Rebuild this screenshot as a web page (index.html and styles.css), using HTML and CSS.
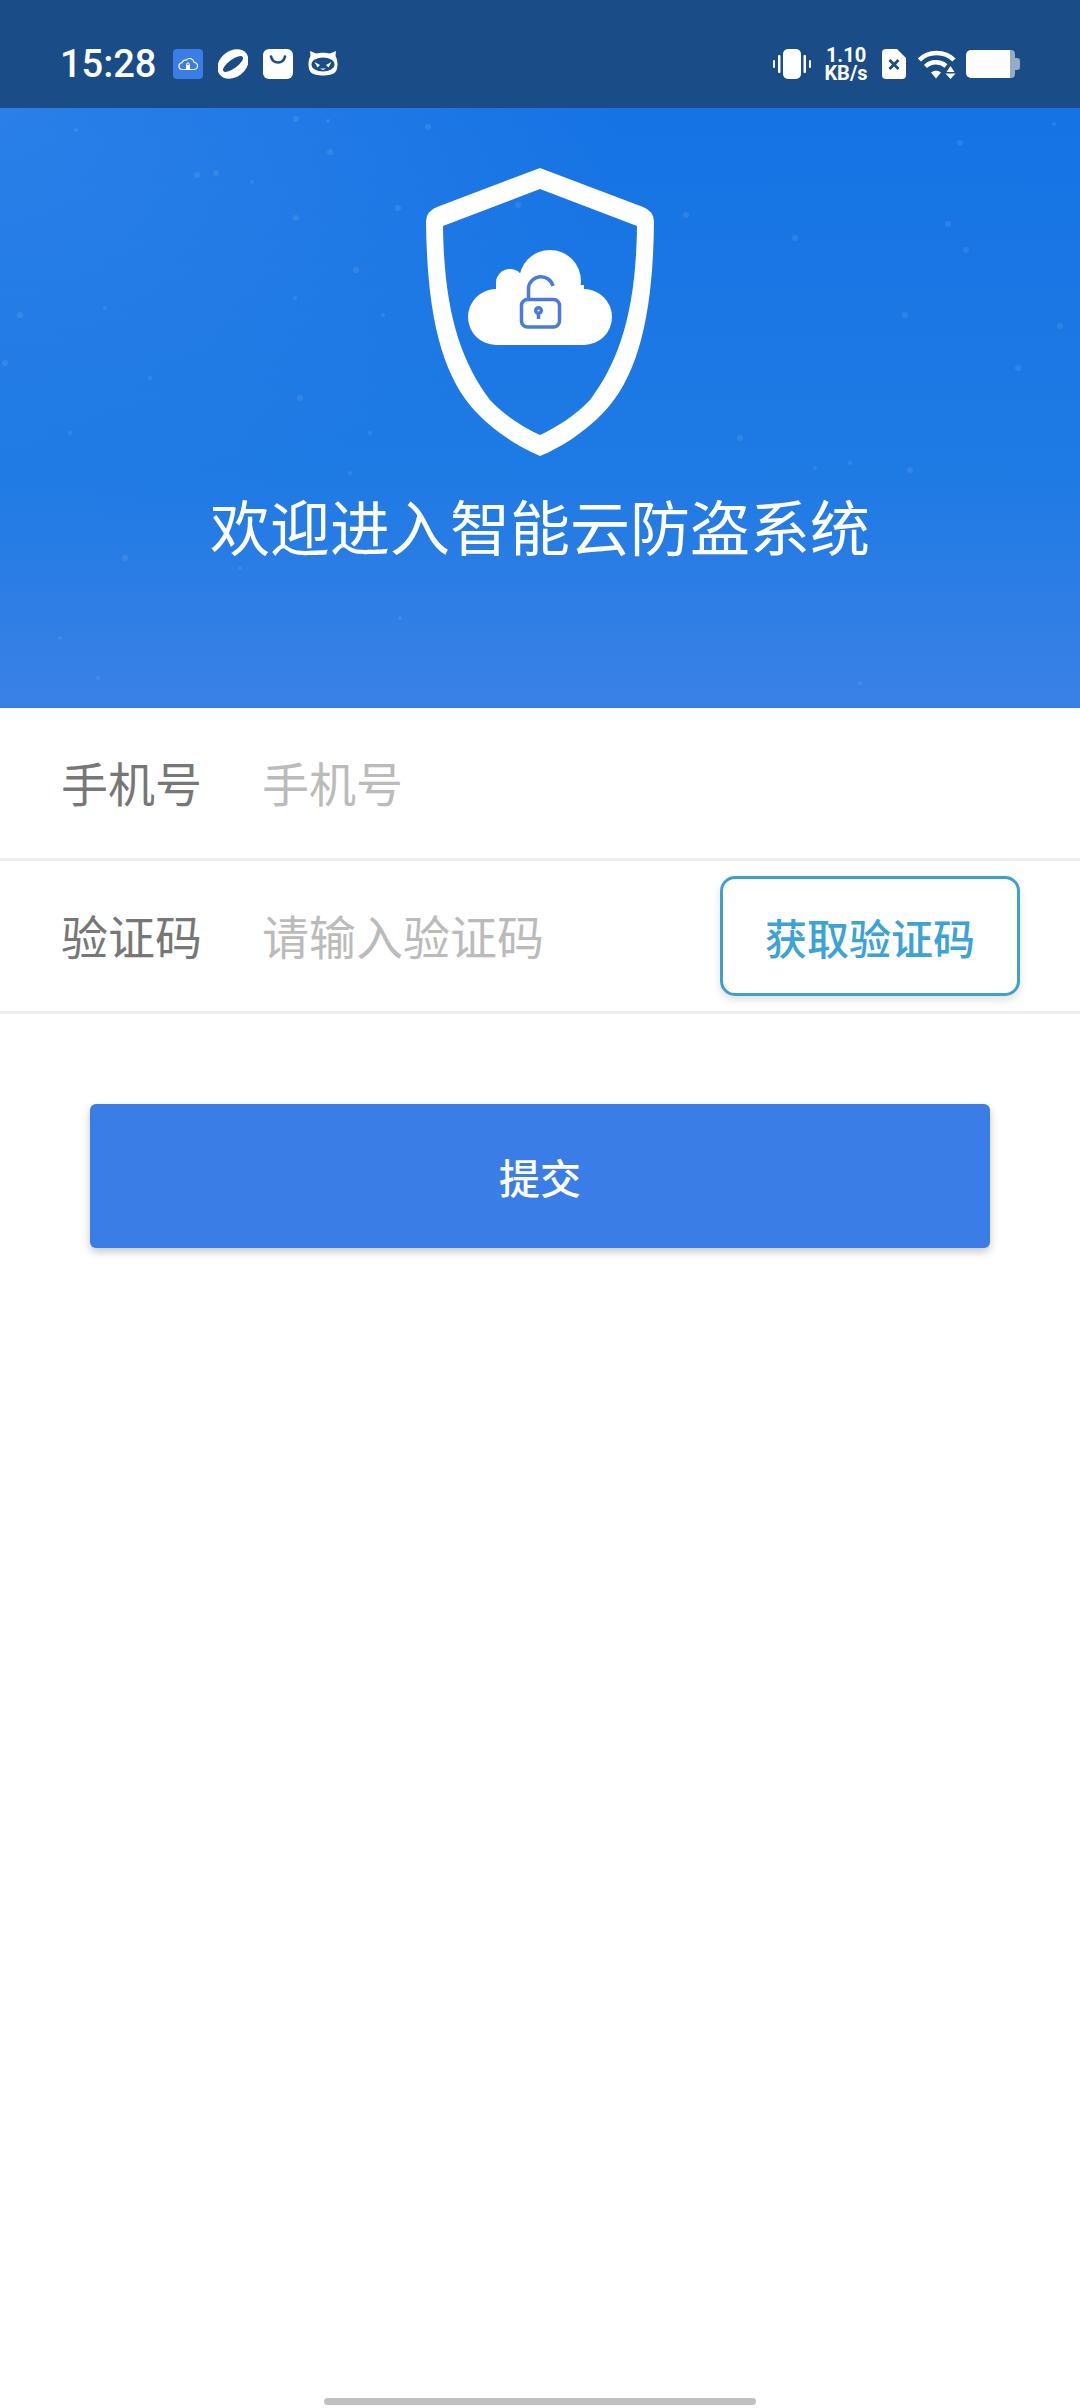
FILE: index.html
```html
<!DOCTYPE html>
<html lang="zh-CN">
<head>
    <meta charset="UTF-8">
    <meta name="viewport" content="width=device-width, initial-scale=1.0">
    <title>智能云防盗系统</title>
    <link rel="stylesheet" href="styles.css">
</head>
<body>
    <div class="status-bar">
        <span class="clock">15:28</span>
        <div class="notify-icons">
            <svg class="icon-30" viewBox="0 0 30 30">
                <rect width="30" height="30" rx="4" fill="#3b7de6"/>
                <path d="M9.500 20.500a3.400 3.400 0 0 1-.4-6.800 3.600 3.600 0 0 1 4-2.600 4.600 4.600 0 0 1 8 2.200 3.600 3.600 0 0 1-.4 7.200z" fill="none" stroke="#fff" stroke-width="1.200"/>
                <rect x="13" y="16" width="4" height="4" fill="#fff"/>
                <path d="M13.800 16v-1a1.200 1.200 0 0 1 2.400 0v1" fill="none" stroke="#fff"/>
            </svg>
            <svg class="icon-30" viewBox="0 0 30 30">
                <ellipse cx="15" cy="15" rx="17" ry="13" fill="#fff" transform="rotate(-38 15 15)"/>
                <ellipse cx="15" cy="15" rx="12" ry="4.300" fill="#1a4d87" transform="rotate(-36 15 15)"/>
            </svg>
            <svg class="icon-30" viewBox="0 0 30 30">
                <rect width="30" height="30" rx="6" fill="#fff"/>
                <path d="M8 7.500c1 4 3.500 6 7 6s6-2 7-6" fill="none" stroke="#1a4d87" stroke-width="2.600" stroke-linecap="round"/>
            </svg>
            <svg class="icon-30" viewBox="0 0 30 30">
                <path d="M2.500 7 L2 2 8 4.500 C12 3.500 18 3.500 22 4.500 L28 2 27.500 7 C30 11 30.500 20 27 23.500 23 27.500 7 27.500 3 23.500 -.5 20 0 11 2.500 7z" fill="#fff"/>
                <ellipse cx="15" cy="15.500" rx="11.500" ry="7" fill="#1a4d87"/>
                <path d="M6.500 13 12 16 9.500 18.500z" fill="#fff"/>
                <path d="M23.500 13 18 16 20.500 18.500z" fill="#fff"/>
                <path d="M12 19.500h6l-3 1.500z" fill="#fff"/>
            </svg>
        </div>
        <div class="system-icons">
            <svg class="icon-vibrate" viewBox="0 0 38 30">
                <rect x="10" y="0" width="18" height="30" rx="5" fill="#fff"/>
                <rect x="0" y="11" width="2" height="8" rx="1" fill="#fff"/>
                <rect x="5" y="6" width="2.500" height="18" rx="1" fill="#fff"/>
                <rect x="30.500" y="6" width="2.500" height="18" rx="1" fill="#fff"/>
                <rect x="36" y="11" width="2" height="8" rx="1" fill="#fff"/>
            </svg>
            <div class="net-speed">1.10<br>KB/s</div>
            <svg class="icon-sim" viewBox="0 0 24 30">
                <path d="M4 0H15L24 9V26a4 4 0 0 1-4 4H4a4 4 0 0 1-4-4V4a4 4 0 0 1 4-4z" fill="#fff"/>
                <path d="M7.500 11 16.500 20M16.500 11 7.500 20" stroke="#1a4d87" stroke-width="2.800" fill="none"/>
            </svg>
            <svg class="icon-wifi" viewBox="0 0 38 30">
                <path d="M1.500 11C10 1.500 27 1.500 36 11" fill="none" stroke="#fff" stroke-width="4.500"/>
                <path d="M7.500 17.500C13 12 22 12 28 17" fill="none" stroke="#fff" stroke-width="4.500"/>
                <path d="M13 23.500 18 29.500 23 23.500C20 21 16 21 13 23.500z" fill="#fff"/>
                <path d="M28.500 23 32.500 17 36.500 23z" fill="#fff"/>
                <path d="M27.500 24.500H37.500L32.500 30z" fill="#fff"/>
            </svg>
            <svg class="icon-battery" viewBox="0 0 54 28">
                <path d="M5 0H44V28H5a5 5 0 0 1-5-5V5a5 5 0 0 1 5-5z" fill="#fff"/>
                <path d="M44 0h1a4 4 0 0 1 4 4v4h2a3 3 0 0 1 3 3v6a3 3 0 0 1-3 3h-2v4a4 4 0 0 1-4 4h-1z" fill="#93adc9"/>
            </svg>
        </div>
    </div>

    <div class="hero">
        <svg class="hero-specks" viewBox="0 0 1080 600">
            <g fill="#fff" fill-opacity="0.09">
                <circle cx="296" cy="11" r="3"/><circle cx="328" cy="13" r="2"/><circle cx="428" cy="19" r="3"/>
                <circle cx="76" cy="22" r="2"/><circle cx="330" cy="44" r="3"/><circle cx="960" cy="35" r="3"/>
                <circle cx="1054" cy="16" r="2"/><circle cx="197" cy="67" r="3"/><circle cx="216" cy="65" r="3"/>
                <circle cx="252" cy="74" r="2"/><circle cx="398" cy="100" r="3"/><circle cx="296" cy="110" r="3"/>
                <circle cx="518" cy="97" r="3"/><circle cx="686" cy="107" r="3"/><circle cx="948" cy="116" r="3"/>
                <circle cx="795" cy="130" r="3"/><circle cx="966" cy="142" r="3"/><circle cx="356" cy="162" r="3"/>
                <circle cx="20" cy="207" r="3"/><circle cx="105" cy="200" r="2"/><circle cx="1060" cy="218" r="3"/>
                <circle cx="383" cy="207" r="2"/><circle cx="295" cy="190" r="2"/><circle cx="905" cy="207" r="3"/>
                <circle cx="1018" cy="260" r="3"/><circle cx="150" cy="270" r="2"/><circle cx="5" cy="255" r="3"/>
                <circle cx="300" cy="290" r="3"/><circle cx="740" cy="330" r="3"/><circle cx="370" cy="325" r="2"/>
                <circle cx="70" cy="325" r="2"/><circle cx="850" cy="355" r="2"/><circle cx="910" cy="362" r="3"/>
                <circle cx="815" cy="360" r="2"/><circle cx="350" cy="365" r="2"/><circle cx="125" cy="450" r="3"/>
                <circle cx="240" cy="460" r="2"/><circle cx="60" cy="530" r="2"/><circle cx="400" cy="510" r="2"/>
                <circle cx="98" cy="570" r="2"/><circle cx="860" cy="575" r="2"/>
            </g>
        </svg>
        <svg class="hero-logo" viewBox="0 0 240 304">
            <path fill="#fff" fill-rule="evenodd" d="M120 8 L223 47 Q234 51 234 62 C233 150 220 215 183 253 C165 272 140 288 120 296 C100 288 75 272 57 253 C20 215 7 150 6 62 Q6 51 17 47z M120 29 L23 66 C24 150 40 200 70 240 C85 256 105 268 120 275 C135 268 155 256 170 240 C200 200 216 150 217 66z"/>
            <g fill="#fff">
                <circle cx="76" cy="157" r="28"/>
                <circle cx="90" cy="123" r="14"/>
                <circle cx="130" cy="121" r="31"/>
                <circle cx="164" cy="157" r="28"/>
                <rect x="76" y="125" width="88" height="60"/>
            </g>
            <g fill="none" stroke="#4a7bdc" stroke-width="3.500">
                <rect x="101.500" y="139.500" width="38" height="27.500" rx="6"/>
                <path d="M108.500 139V128a12.500 12.500 0 0 1 24.500-2"/>
                <circle cx="118.500" cy="150.500" r="2.800"/>
                <path d="M118.500 153.500V159"/>
            </g>
        </svg>
        <h1 class="hero-title">欢迎进入智能云防盗系统</h1>
    </div>

    <div class="form-row">
        <label class="form-label" for="phone">手机号</label>
        <input id="phone" class="form-input" type="text" placeholder="手机号">
    </div>
    <div class="form-row">
        <label class="form-label" for="code">验证码</label>
        <input id="code" class="form-input" type="text" placeholder="请输入验证码">
        <button class="code-btn">获取验证码</button>
    </div>

    <button class="submit-btn">提交</button>

    <div class="home-bar"></div>
</body>
</html>
```

FILE: styles.css
```css
* {
    margin: 0;
    padding: 0;
    box-sizing: border-box;
}

html, body {
    background-color: #fff;
}

body {
    display: flex;
    flex-direction: column;
    height: 2408px;
    overflow: hidden;
    font-family: "Noto Sans CJK SC", "Noto Sans", sans-serif;
}

svg {
    display: block;
    flex: none;
}

/* Status bar */
.status-bar {
    display: flex;
    align-items: center;
    height: 108px;
    padding: 20px 60px 0 60px;
    background-color: #1a4d87;
    color: #fff;
    font-family: Roboto, sans-serif;
}

.clock {
    width: 113px;
    font-size: 38px;
    font-weight: 500;
    line-height: 44px;
}

.notify-icons {
    display: flex;
    gap: 15px;
}

.icon-30 {
    width: 30px;
    height: 30px;
}

.system-icons {
    display: flex;
    align-items: center;
    margin-left: auto;
}

.icon-vibrate {
    width: 38px;
    height: 30px;
}

.net-speed {
    width: 46px;
    margin-left: 12px;
    font-size: 20px;
    font-weight: 700;
    line-height: 18px;
    text-align: center;
}

.icon-sim {
    width: 24px;
    height: 30px;
    margin-left: 13px;
}

.icon-wifi {
    width: 38px;
    height: 30px;
    margin-left: 12px;
}

.icon-battery {
    width: 54px;
    height: 28px;
    margin-left: 10px;
}

/* Hero */
.hero {
    position: relative;
    display: flex;
    flex-direction: column;
    align-items: center;
    height: 600px;
    padding-top: 52px;
    background:
        radial-gradient(ellipse 620px 420px at 0 0, rgba(80, 150, 240, 0.35), rgba(80, 150, 240, 0)),
        linear-gradient(to bottom, #1673e4 0%, #1e7ae4 60%, #3a81e6 100%);
}

.hero-specks {
    position: absolute;
    top: 0;
    left: 0;
    width: 1080px;
    height: 600px;
}

.hero-logo {
    position: relative;
    width: 240px;
    height: 304px;
}

.hero-title {
    position: relative;
    margin-top: 19px;
    color: #fff;
    font-size: 60px;
    font-weight: 400;
    line-height: 84px;
}

/* Form */
.form-row {
    display: flex;
    align-items: center;
    height: 153px;
    padding: 0 60px 0 61px;
    border-bottom: 3px solid #eee;
}

.form-label {
    width: 201px;
    padding-bottom: 4px;
    color: #777;
    font-size: 47px;
}

.form-input {
    flex: 1;
    min-width: 0;
    padding-bottom: 4px;
    border: none;
    outline: none;
    background: none;
    color: #333;
    font-family: inherit;
    font-size: 47px;
}

.form-input::placeholder {
    color: #bbb;
    opacity: 1;
}

.code-btn {
    width: 300px;
    height: 120px;
    border: 3px solid #3fa0d0;
    border-radius: 15px;
    background-color: #fff;
    box-shadow: 0 4px 8px rgba(0, 0, 0, 0.12);
    color: #3ba3d6;
    font-family: inherit;
    font-size: 42px;
    font-weight: 500;
}

.submit-btn {
    height: 144px;
    margin: 90px 90px 0;
    border: none;
    border-radius: 6px;
    background-color: #3b7de6;
    box-shadow: 0 4px 8px rgba(0, 0, 0, 0.22);
    color: #fff;
    font-family: inherit;
    font-size: 41px;
    font-weight: 500;
}

.home-bar {
    align-self: center;
    width: 432px;
    height: 7px;
    margin-top: auto;
    margin-bottom: 3px;
    border-radius: 4px;
    background-color: #c0c0c0;
}
```
